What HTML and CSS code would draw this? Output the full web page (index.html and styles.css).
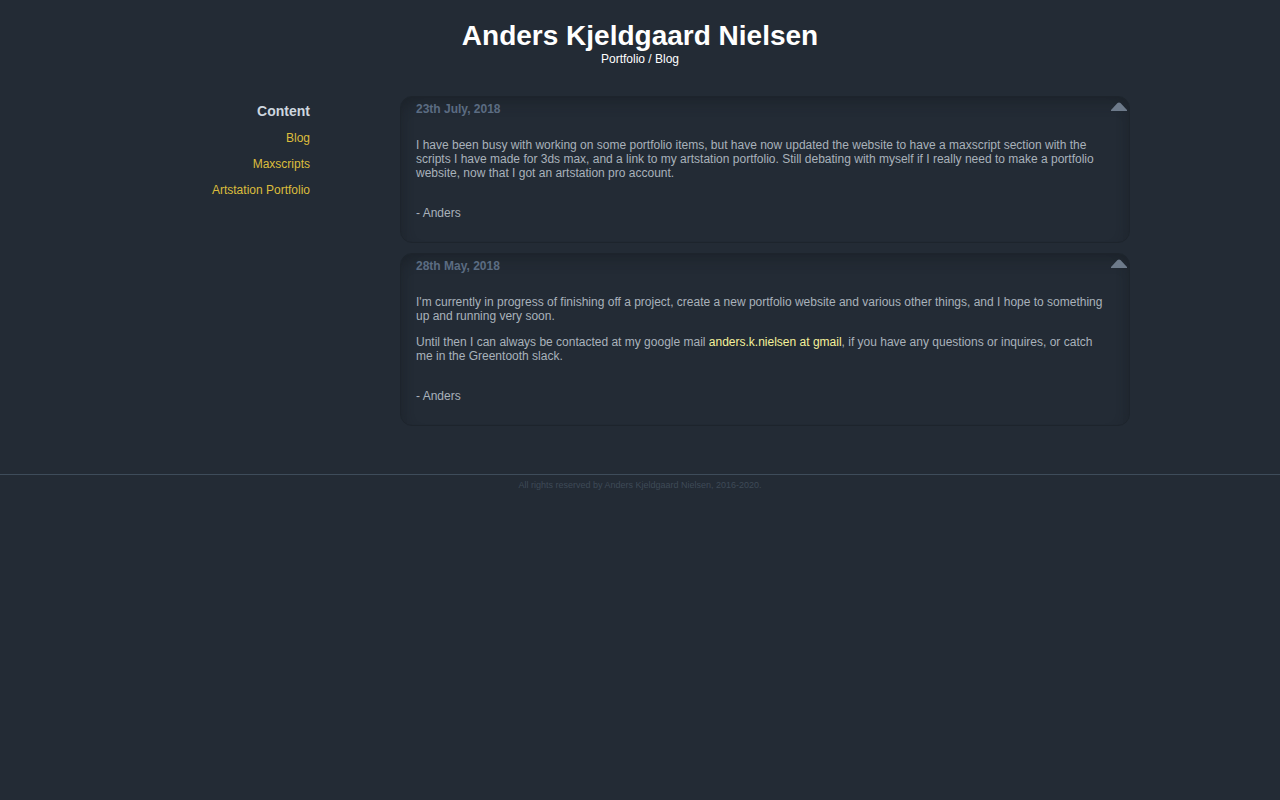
FILE: index.html
```html
<!DOCTYPE html>
<html lang="en">
<head>
    <meta charset="UTF-8" />
    <title>Anders Kjeldgaard Nielsen</title>
    <link rel="stylesheet" href="styles.css">
</head>
<body>

<div class="header">
    <h1>Anders Kjeldgaard Nielsen</h1>
    <div class="subtitle">Portfolio / Blog</div>
</div>

<div class="content">
    <div class="sidebar">
        <h3>Content</h3>
        <a href="#">Blog</a>
        <a href="#">Maxscripts</a>
        <a href="#">Artstation Portfolio</a>
    </div>

    <div class="posts">
        <div class="post">
            <div class="post-date">23th July, 2018</div>
            <svg class="collapse" width="16" height="9" viewBox="0 0 16 9"><path d="M0 8 L6.5 1 Q8 0 9.5 1 L16 8 L16 9 L0 9 Z" fill="#6d7a8a"/></svg>
            <p>I have been busy with working on some portfolio items, but have now updated the website to have a maxscript section with the scripts I have made for 3ds max, and a link to my artstation portfolio. Still debating with myself if I really need to make a portfolio website, now that I got an artstation pro account.</p>
            <p class="sign">- Anders</p>
        </div>

        <div class="post">
            <div class="post-date">28th May, 2018</div>
            <svg class="collapse" width="16" height="9" viewBox="0 0 16 9"><path d="M0 8 L6.5 1 Q8 0 9.5 1 L16 8 L16 9 L0 9 Z" fill="#6d7a8a"/></svg>
            <p>I'm currently in progress of finishing off a project, create a new portfolio website and various other things, and I hope to something up and running very soon.</p>
            <p>Until then I can always be contacted at my google mail <a href="#">anders.k.nielsen at gmail</a>, if you have any questions or inquires, or catch me in the Greentooth slack.</p>
            <p class="sign">- Anders</p>
        </div>
    </div>
</div>

<div class="footer">All rights reserved by Anders Kjeldgaard Nielsen, 2016-2020.</div>

</body>
</html>
```

FILE: styles.css
```css
html, body {
    margin: 0;
    padding: 0;
    height: 100%;
    font-family: "Liberation Sans", Arial, sans-serif;
    font-size: 12px;
    line-height: 14px;
    background: #232b35;
    color: #a9b2bb;
}

.header {
    height: 96px;
    padding-top: 19px;
    box-sizing: border-box;
    text-align: center;
    color: #fff;
}

.header h1 {
    margin: 0;
    font-size: 28px;
    line-height: 33px;
    font-weight: bold;
}

.subtitle {
    color: #fff;
}

.content {
    display: flex;
    align-items: flex-start;
}

.sidebar {
    width: 310px;
    margin-right: 90px;
    display: flex;
    flex-direction: column;
    align-items: flex-end;
    padding-top: 7px;
}

.sidebar h3 {
    margin: 0 0 6px;
    font-size: 14px;
    line-height: 16px;
    font-weight: bold;
    color: #cdd6df;
}

.sidebar a {
    color: #dcbd3c;
    text-decoration: none;
    height: 26px;
    line-height: 26px;
}

.posts {
    width: 730px;
    display: flex;
    flex-direction: column;
    gap: 10px;
}

.post {
    position: relative;
    box-sizing: border-box;
    padding: 5px 20px 22px 15px;
    border: 1px solid #1d242c;
    border-radius: 12px;
    box-shadow:
        inset 0 14px 12px -8px rgba(24, 29, 35, 0.5),
        inset 12px 0 10px -8px rgba(24, 29, 35, 0.2),
        inset -12px 0 10px -8px rgba(24, 29, 35, 0.2);
}

.post-date {
    margin-bottom: 22px;
    font-weight: bold;
    color: #5b6c82;
}

.post p {
    margin: 0 0 12px;
}

.post p.sign {
    margin: 26px 0 0;
}

.post p a {
    color: #f5f19a;
    text-decoration: none;
}

.collapse {
    position: absolute;
    top: 5px;
    right: 2px;
}

.footer {
    margin-top: 48px;
    padding-top: 5px;
    border-top: 1px solid #3e4c5a;
    text-align: center;
    font-size: 9px;
    line-height: 11px;
    color: #3e4a57;
}
```
